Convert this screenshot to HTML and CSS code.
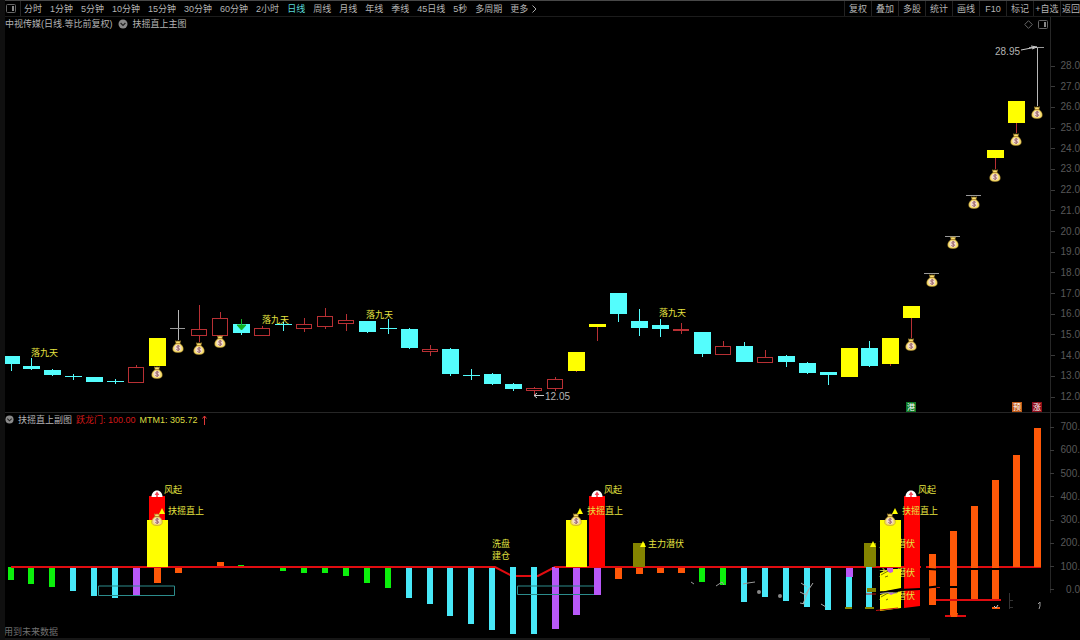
FILE: index.html
```
<!DOCTYPE html>
<html lang="zh-CN">

<head>
  <meta charset="UTF-8" />
  <meta name="viewport" content="width=device-width, initial-scale=1.0" />
  <title>中视传媒 日线</title>
  <link rel="stylesheet" href="styles.css">
</head>

<body>

  <svg class="defs" width="0" height="0" aria-hidden="true">
    <symbol id="bag" viewBox="0 0 12 13">
      <path d="M3.5 0.8 L5 1.5 L6 0.7 L7 1.5 L8.5 0.8 L7.9 3.6 C10 5 11.4 7.2 11.2 9.3 C11 11.6 9.5 12.4 6 12.4 C2.5 12.4 1 11.6 0.8 9.3 C0.6 7.2 2 5 4.1 3.6 Z" fill="#f8e070" stroke="#b08a2c" stroke-width="0.6" />
      <path d="M3.4 5.6 C5 4.4 7.4 4.6 8.6 6 C9.6 7.6 9.4 10 8 10.8 C6 11.6 3.6 11 2.8 9.6 C2.2 8.2 2.4 6.6 3.4 5.6 Z" fill="#f4dccc" />
      <path d="M4 3.6 H8" stroke="#a87820" stroke-width="0.9" />
      <path d="M7.8 6.4 C7 5.4 4.6 5.6 4.7 7 C4.8 8.4 7.6 7.8 7.6 9.2 C7.6 10.5 5 10.5 4.3 9.4 M6.2 4.9 V11" fill="none" stroke="#94606a" stroke-width="0.9" />
    </symbol>
    <symbol id="rise" viewBox="0 0 12 7">
      <path d="M0.5 7 C0.5 3 3 0.5 6 0.5 C9 0.5 11.5 3 11.5 7 Z" fill="#fff" />
      <path d="M6 1.5 L8.4 5 H6.8 V7 H5.2 V5 H3.6 Z" fill="#f04858" />
    </symbol>
    <symbol id="fold" viewBox="0 0 10 10">
      <circle cx="5" cy="5" r="4.5" fill="#8a8a8a" />
      <path d="M2.6 4 L5 6.4 L7.4 4" fill="none" stroke="#222" stroke-width="1.2" />
    </symbol>
    <symbol id="pane" viewBox="0 0 10 9">
      <rect x="0.5" y="0.5" width="9" height="8" rx="1" fill="none" stroke="#666" />
      <rect x="6" y="2" width="2" height="5" fill="#888" />
    </symbol>
  </svg>

  <header class="toolbar">
    <nav class="periods">
      <button class="pane-btn" aria-label="侧栏"><svg width="10" height="9"><use href="#pane" /></svg></button>
      <button>分时</button>
      <button>1分钟</button>
      <button>5分钟</button>
      <button>10分钟</button>
      <button>15分钟</button>
      <button>30分钟</button>
      <button>60分钟</button>
      <button>2小时</button>
      <button class="active">日线</button>
      <button>周线</button>
      <button>月线</button>
      <button>年线</button>
      <button>季线</button>
      <button>45日线</button>
      <button>5秒</button>
      <button>多周期</button>
      <button class="more">更多<svg width="5" height="8"><path d="M0.5 0.5 L4 4 L0.5 7.5" fill="none" stroke="#aaa" /></svg></button>
    </nav>
    <nav class="tools">
      <button>复权</button>
      <button>叠加</button>
      <button>多股</button>
      <button>统计</button>
      <button>画线</button>
      <button>F10</button>
      <button>标记</button>
      <button>+自选</button>
      <button>返回</button>
    </nav>
  </header>

  <main>
    <section class="panel">
      <div class="plot">
        <div class="title">
          <span>中视传媒(日线.等比前复权)</span>
          <svg width="10" height="10"><use href="#fold" /></svg>
          <span>扶摇直上主图</span>
          <span class="corner">
            <svg width="9" height="9"><path d="M4.5 0.7 L8.3 4.5 L4.5 8.3 L0.7 4.5 Z" fill="none" stroke="#666" /></svg>
            <svg width="10" height="9"><use href="#pane" /></svg>
          </span>
        </div>
        <svg class="chart" id="priceChart" viewBox="5 31 1045 381"></svg>
      </div>
      <ol class="axis price-axis">
        <li>28.0</li><li>27.0</li><li>26.0</li><li>25.0</li><li>24.0</li><li>23.0</li>
        <li>22.0</li><li>21.0</li><li>20.0</li><li>19.0</li><li>18.0</li><li>17.0</li>
        <li>16.0</li><li>15.0</li><li>14.0</li><li>13.0</li><li>12.0</li>
      </ol>
    </section>

    <section class="panel">
      <div class="plot">
        <div class="title subtitle">
          <svg width="9" height="9"><use href="#fold" /></svg>
          <span>扶摇直上副图</span>
          <span class="red">跃龙门: 100.00</span>
          <span class="yellow">MTM1: 305.72</span>
          <svg class="up" width="5" height="10"><path d="M2.5 10 V1 M0.5 3.5 L2.5 1 L4.5 3.5" fill="none" stroke="#e03838" /></svg>
        </div>
        <svg class="chart" id="signalChart" viewBox="5 426 1045 212"></svg>
      </div>
      <ol class="axis signal-axis">
        <li>700.</li><li>600.</li><li>500.</li><li>400.</li><li>300.</li><li>200.</li><li>100.</li><li>0.0</li>
      </ol>
    </section>
  </main>

  <footer></footer>

  <script>
    const NS = "http://www.w3.org/2000/svg";
    const CYAN = "#54fdfd";
    const YELLOW = "#ffff00";
    const RED = "#b83034";

    function add(parent, tag, attrs, text) {
      const el = document.createElementNS(NS, tag);
      for (const key in attrs) el.setAttribute(key, attrs[key]);
      if (text) el.textContent = text;
      parent.appendChild(el);
      return el;
    }

    function rect(parent, x, y, w, h, fill) {
      return add(parent, "rect", { x, y, width: w, height: h, fill });
    }

    function path(parent, d, stroke, width = 1, fill = "none") {
      return add(parent, "path", { d, stroke, "stroke-width": width, fill });
    }

    function label(parent, x, y, text, cls = "signal") {
      return add(parent, "text", { x, y, class: cls }, text);
    }

    function icon(parent, id, x, y, w, h) {
      add(parent, "use", { href: "#" + id, x, y, width: w, height: h });
    }

    const slot = i => Math.floor(11 + 20.95 * i);

    // kind, body top, body bottom, high, low
    const candles = [
      ["c", 356, 364, 356, 371], ["c", 366, 369, 358, 370], ["c", 370, 375, 369, 376],
      ["c", 376, 377, 374, 380], ["c", 377, 382, 377, 382], ["c", 381, 382, 379, 384],
      ["r", 367, 382, 365, 367], ["y", 338, 366, 338, 366], ["w", 328, 329, 310, 340],
      ["r", 329, 335, 305, 342], ["r", 318, 335, 312, 318], ["c", 324, 333, 324, 335],
      ["r", 328, 335, 326, 328], ["c", 324, 325, 322, 331], ["r", 324, 328, 318, 332],
      ["r", 316, 326, 308, 329], ["r", 320, 323, 314, 331], ["c", 321, 332, 321, 333],
      ["c", 328, 329, 319, 334], ["c", 329, 348, 328, 349], ["r", 349, 351, 345, 356],
      ["c", 349, 374, 348, 376], ["c", 375, 376, 369, 380], ["c", 374, 384, 373, 385],
      ["c", 384, 389, 383, 391], ["r", 388, 390, 387, 396], ["r", 379, 388, 377, 391],
      ["y", 352, 371, 352, 372], ["y", 324, 327, 324, 341], ["c", 293, 314, 293, 322],
      ["c", 321, 328, 309, 336], ["c", 325, 329, 319, 337], ["r", 329, 330, 323, 334],
      ["c", 332, 354, 332, 357], ["r", 346, 354, 341, 346], ["c", 346, 362, 342, 362],
      ["r", 357, 362, 350, 363], ["c", 356, 362, 355, 367], ["c", 363, 373, 362, 374],
      ["c", 372, 375, 372, 385], ["y", 348, 377, 348, 377], ["c", 348, 366, 341, 367],
      ["y", 338, 364, 338, 366], ["y", 306, 318, 306, 338], ["w", 273, 274, 273, 274],
      ["w", 236, 237, 236, 237], ["w", 195, 196, 195, 196], ["y", 150, 158, 150, 169],
      ["y", 101, 123, 101, 133], ["w", 47, 48, 47, 106]
    ];

    // candle index -> top of the money bag
    const bags = { 7: 366, 8: 340, 9: 342, 10: 335, 43: 338, 44: 274, 45: 236, 46: 196, 47: 169, 48: 133, 49: 106 };

    function drawPrice() {
      const svg = document.getElementById("priceChart");
      const crisp = add(svg, "g", { class: "crisp" });

      candles.forEach(([kind, top, bottom, high, low], i) => {
        const x = slot(i);
        const wick = { c: CYAN, r: RED, y: RED, w: "#b8b8b8" }[kind];
        if (low > high + 1) rect(crisp, x, high, 1, low - high, wick);
        if (kind === "r") {
          add(crisp, "rect", { x: x - 7.5, y: top + 0.5, width: 15, height: bottom - top, fill: "#000", stroke: RED });
        } else {
          const fill = { c: CYAN, y: YELLOW, w: "#999" }[kind];
          rect(crisp, x - 8, top, kind === "w" ? 15 : 17, bottom - top, fill);
        }
      });
      for (const i in bags) icon(svg, "bag", slot(Number(i)) - 6, bags[i], 12, 13);

      path(svg, "M241.5 319 V326 M237 325 H246 L241.5 330 Z", "#10b020", 1, "#10b020");

      label(svg, 31, 356, "落九天");
      label(svg, 262, 323, "落九天");
      label(svg, 366, 318, "落九天");
      label(svg, 659, 316, "落九天");

      label(svg, 995, 55, "28.95", "quote");
      path(svg, "M1021 50 L1034 47.5 M1031 46 L1037 47 L1032 49", "#ccc");
      label(svg, 545, 400, "12.05", "quote");
      path(svg, "M544 395.5 H534 M537 393 L534 395.5 L537 398", "#ccc");

      [[906, "#0e7a26", "港"], [1012, "#c05a18", "预"], [1032, "#8c0c18", "涨"]].forEach(([x, fill, text]) => {
        rect(svg, x, 402, 10, 10, fill);
        label(svg, x + 1, 410, text, "badge");
      });
    }

    // slot, colour, top, bottom
    const bars = [
      [0, "g", 567, 580], [1, "g", 567, 584], [2, "g", 567, 587], [3, "c", 567, 591],
      [4, "c", 567, 596], [5, "c", 567, 598], [6, "p", 567, 595], [7, "o", 567, 583],
      [8, "o", 567, 573], [9, "o", 567, 568], [10, "o", 562, 567], [11, "g", 565, 568],
      [12, "g", 567, 568], [13, "g", 567, 571], [14, "g", 567, 573], [15, "g", 567, 573],
      [16, "g", 567, 576], [17, "g", 567, 583], [18, "g", 567, 588], [19, "c", 567, 598],
      [20, "c", 567, 604], [21, "c", 567, 616], [22, "c", 567, 624], [23, "c", 567, 630],
      [24, "c", 567, 634], [25, "c", 567, 634], [26, "p", 567, 629], [27, "p", 567, 615],
      [28, "p", 567, 595], [29, "o", 567, 579], [30, "o", 567, 574], [31, "o", 567, 573],
      [32, "o", 567, 573], [33, "g", 567, 582], [34, "g", 567, 585], [35, "c", 567, 602],
      [36, "c", 567, 597], [37, "c", 567, 601], [38, "c", 567, 607], [39, "c", 567, 610],
      [40, "c", 577, 608], [40, "p", 567, 577], [41, "c", 567, 608], [44, "o", 554, 605],
      [45, "o", 531, 615], [46, "o", 506, 600], [47, "o", 480, 600], [48, "o", 455, 567],
      [49, "o", 428, 567]
    ];
    const barColor = { g: "#0cf00c", c: "#48e8f8", p: "#b858f8", o: "#ff5808" };

    function triangle(svg, x, y) {
      path(svg, `M${x} ${y} L${x + 3} ${y + 6} H${x - 3} Z`, "none", 0, YELLOW);
    }

    function drawSignals() {
      const svg = document.getElementById("signalChart");

      path(svg, "M11 567 H495 L512 576 H538 L555 567 H1041", "#e00c10", 2);

      const barLayer = add(svg, "g", { class: "crisp" });
      bars.forEach(([i, color, top, bottom]) => {
        const wide = color === "p" || color === "o";
        rect(barLayer, slot(i) - 3, top, wide ? 7 : 6, bottom - top, barColor[color]);
      });
      path(svg, "M98.5 586 H174.5 V595.5 H98.5 Z M594 586 H517.5 V594.5 H594", "#2c8c8c");
      path(svg, "M11 567 H495 M555 567 H862", "#e00c10", 2);

      // signal columns
      rect(svg, 149, 496, 16, 24, "#ff0000");
      rect(svg, 147, 520, 21, 47, YELLOW);
      rect(svg, 566, 520, 21, 47, YELLOW);
      rect(svg, 589, 496, 16, 71, "#ff0000");
      rect(svg, 633, 543, 12, 24, "#848400");
      rect(svg, 864, 543, 12, 24, "#848400");
      path(svg, "M904 496 H920 V606 L904 608 Z", "none", 0, "#ff0000");
      label(svg, 879, 547, "主力潜伏");
      label(svg, 879, 576, "主力潜伏");
      label(svg, 879, 599, "主力潜伏");
      rect(svg, 880, 520, 21, 47, YELLOW);

      // broken copies under the zero line
      path(svg, "M880 573 L890 569 H901 V588 L880 592 Z", "none", 0, YELLOW);
      path(svg, "M880 595 L886 593 L893 594 L901 591 V608 L880 611 Z", "none", 0, YELLOW);
      path(svg, "M887 568 H893 V572 L890 573 L887 571 Z", "none", 0, "#c060e0");
      path(svg, "M888 593 L895 593 L891 595 Z", "none", 0, "#c060e0");
      path(svg, "M881 575 L888 571 M885 577 L888 576 M881 597 L888 593 M886 600 L888 599", "#777700");
      path(svg, "M875 592.5 L889 592 L899 590 L920 589 M879 593 L902 590", "#000", 2);
      path(svg, "M880 593.5 L888 592.5 L897 593", "#999");
      path(svg, "M876 610.5 L898 608 M930 587.5 H940 M866 594 H876", "#c01010");
      path(svg, "M921 567 H926 M929 569 L944 570 M970 569 H1001 M928 587.5 L937 586.5 M950 587 H957", "#000", 2);
      rect(svg, 867, 588, 9, 4, "#848400");
      rect(svg, 865, 607, 9, 2, "#848400");
      rect(svg, 845, 607, 7, 2, "#848400");
      path(svg, "M936 600 H1001", "#e00c10", 2);
      path(svg, "M945 616 H966", "#e00c10", 2);
      path(svg, "M950 613 H958 L957 617 H951 Z", "none", 0, "#ff5808");
      rect(svg, 992, 607, 8, 2, "#ff5808");
      path(svg, "M994 606 L996 608 L998 605", "#ccc");
      path(svg, "M1009.5 593 V609 M1009 600.5 H1013 M1009 607.5 H1013", "#333");
      path(svg, "M1038 604 L1040 602 L1040 606 L1039 609", "#999");

      // scratches
      path(svg, "M691 582 L694 584 M743 584 L748 583 L755 582 M716 586 L722 582 L724 585", "#999");
      path(svg, "M801 583 L807 587 M800 592 L806 595 M800 603 L805 604 M805 595 L813 583 M803 604 L809 589 M821 604 L826 607", "#aaa");
      add(svg, "circle", { cx: 759, cy: 592, r: 2, fill: "#888" });
      add(svg, "circle", { cx: 780, cy: 596, r: 2, fill: "#888" });

      [157, 597, 911].forEach(x => icon(svg, "rise", x - 6, 490, 12, 7));
      [157, 576, 890].forEach(x => icon(svg, "bag", x - 6, 513, 12, 13));
      triangle(svg, 162, 508);
      triangle(svg, 580, 508);
      triangle(svg, 895, 508);
      triangle(svg, 643, 541);
      triangle(svg, 873, 541);

      label(svg, 164, 493, "风起");
      label(svg, 604, 493, "风起");
      label(svg, 918, 493, "风起");
      label(svg, 168, 514, "扶摇直上");
      label(svg, 587, 514, "扶摇直上");
      label(svg, 902, 514, "扶摇直上");
      label(svg, 492, 547, "洗盘");
      label(svg, 492, 559, "建仓");
      label(svg, 648, 547, "主力潜伏");
      label(svg, 4, 635, "用到未来数据", "hint");
    }

    drawPrice();
    drawSignals();
  </script>
</body>

</html>
```
FILE: styles.css
```
* {
  box-sizing: border-box;
}

body {
  margin: 0;
  padding-left: 5px;
  background: linear-gradient(to right, #101010 5px, #000 5px);
  color: #b4b4b4;
  font-family: "Liberation Sans", "Noto Sans CJK SC", sans-serif;
  font-size: 9px;
  line-height: 14px;
  overflow-x: hidden;
}

.defs {
  position: absolute;
}

button {
  margin: 0;
  padding: 0;
  border: 0;
  background: none;
  color: inherit;
  font: inherit;
  white-space: nowrap;
  cursor: pointer;
}

button:hover {
  color: #fff;
}

/* toolbar */

.toolbar {
  display: flex;
  justify-content: space-between;
  height: 17px;
  border-top: 1px solid #484848;
  border-bottom: 1px solid #1c1c1c;
}

.periods {
  display: flex;
  gap: 8px;
}

.periods .pane-btn {
  display: flex;
  align-items: center;
  width: 16px;
  margin-right: -5px;
  padding-left: 1px;
  border-right: 1px solid #262626;
}

.periods .active {
  color: #58d8d8;
}

.more {
  display: flex;
  align-items: center;
  gap: 4px;
}

.tools {
  display: flex;
}

.tools button {
  width: 27px;
  border-left: 1px solid #222;
}

.tools button:last-child {
  width: 20px;
  padding-left: 1px;
  text-align: left;
}

/* chart panels */

.panel {
  display: grid;
  grid-template-columns: 1fr 30px;
}

.panel + .panel {
  border-top: 1px solid #262626;
}

.title {
  display: flex;
  align-items: center;
  gap: 5px;
  height: 14px;
}

.subtitle {
  gap: 4px;
  height: 13px;
}

.corner {
  display: flex;
  gap: 5px;
  margin-left: auto;
  padding-right: 2px;
}

.red {
  color: #d01818;
}

.yellow {
  color: #dcdc40;
}

.chart {
  display: block;
  width: 100%;
  height: auto;
}

.crisp {
  shape-rendering: crispEdges;
}

.chart text {
  font-size: 9px;
}

.signal {
  fill: #e4e440;
}

.chart .quote {
  fill: #b4b4b4;
  font-size: 10px;
}

.chart .badge {
  fill: #fff;
  font-size: 8px;
}

.hint {
  fill: #707070;
}

/* axes */

.axis {
  display: flex;
  flex-direction: column;
  justify-content: space-between;
  margin: 0;
  list-style: none;
  color: #585858;
  font-size: 10px;
  overflow: hidden;
}

.axis li {
  display: flex;
  align-items: center;
  justify-content: space-between;
}

.axis li::before {
  content: "";
  width: 4px;
  height: 1px;
  background: #3a3a3a;
}

.price-axis {
  padding: 42px 0 8px;
  border-left: 1px solid #262626;
}

.signal-axis {
  padding: 7px 0 41px;
  background: linear-gradient(#262626, #262626) no-repeat 0 0 / 1px 80%;
}

footer {
  width: 86%;
  height: 2px;
  background: #161616;
}
```
